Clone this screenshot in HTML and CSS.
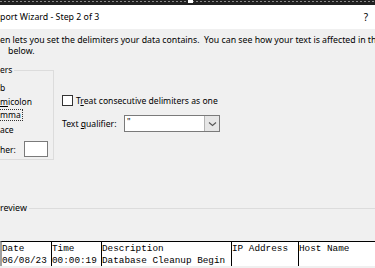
FILE: index.html
```html
<!DOCTYPE html>
<html lang="en">
<head>
    <meta charset="UTF-8">
    <meta name="viewport" content="width=device-width, initial-scale=1.0">
    <title>Text Import Wizard - Step 2 of 3</title>
    <link rel="stylesheet" href="styles.css">
</head>
<body>
    <div class="topbar"><span class="grip"></span></div>

    <div class="titlebar">
        <span class="title">port Wizard - Step 2 of 3</span>
        <span class="help">?</span>
    </div>

    <div class="intro">
        <span class="line">en lets you set the delimiters your data contains.&nbsp; You can see how your text is affected in the</span>
        <span class="line indent">below.</span>
    </div>

    <div class="options">
        <div class="group">
            <span class="group-title">ers</span>
            <div class="item">b</div>
            <div class="item"><u>m</u>icolon</div>
            <div class="item"><span class="focus">mma</span></div>
            <div class="item">ace</div>
            <div class="item other">her: <span class="textbox"></span></div>
        </div>

        <div class="side">
            <div class="check-row">
                <span class="checkbox"></span>
                <span>T<u>r</u>eat consecutive delimiters as one</span>
            </div>
            <div class="qualifier-row">
                <span class="qualifier-label">Text <u>q</u>ualifier:</span>
                <div class="select">
                    <span class="select-value">"</span>
                    <span class="select-arrow">
                        <svg width="9" height="6" viewBox="0 0 9 6"><path d="M1 1.5 L4.5 4.5 L8 1.5" fill="none" stroke="#555" stroke-width="1.1"/></svg>
                    </span>
                </div>
            </div>
        </div>
    </div>

    <div class="preview-head">
        <span>review</span>
        <span class="rule"></span>
    </div>

    <div class="preview">
        <div class="cell head">Date</div>
        <div class="cell head">Time</div>
        <div class="cell head">Description</div>
        <div class="cell head">IP Address</div>
        <div class="cell head">Host Name</div>
        <div class="cell">06/08/23</div>
        <div class="cell">00:00:19</div>
        <div class="cell">Database Cleanup Begin</div>
        <div class="cell"></div>
        <div class="cell"></div>
    </div>
</body>
</html>
```

FILE: styles.css
```css
body {
    margin: 0;
    height: 268px;
    overflow: hidden;
    background: #f0f0f0;
    font-family: "Noto Sans", sans-serif;
    font-size: 8.9px;
    color: #000;
}
.topbar {
    height: 5px;
    background-color: #202020;
    background-image: repeating-linear-gradient(90deg, #8a8a8a 0 2px, transparent 2px 4px);
    background-size: 100% 1px;
    background-position: 0 1px;
    background-repeat: no-repeat;
}
.grip {
    display: block;
    width: 5px;
    height: 3px;
    margin-left: 188px;
    background: #fff;
}
.titlebar {
    height: 24px;
    background: #fff;
    display: flex;
    align-items: center;
    justify-content: space-between;
    padding-right: 7px;
    font-size: 8.8px;
}
.help {
    font-size: 10px;
}
.intro {
    padding-top: 6px;
    font-size: 8.75px;
    line-height: 11px;
    white-space: nowrap;
}
.line {
    display: block;
}
.indent {
    padding-left: 8px;
}
.options {
    display: flex;
    margin-top: 13px;
}
.group {
    width: 53px;
    padding-bottom: 1px;
    border: 1px solid #dcdcdc;
    border-left: 0;
    font-size: 8.5px;
}
.group-title {
    display: block;
    width: fit-content;
    height: 12px;
    margin-top: -7px;
    margin-bottom: 4px;
    padding-right: 2px;
    line-height: 12px;
    background: #f0f0f0;
}
.item {
    display: flex;
    align-items: center;
    height: 14px;
    white-space: nowrap;
}
.focus {
    display: block;
    line-height: 10px;
    padding-right: 1px;
    outline: 1px dotted #333;
}
.other {
    height: 18px;
    margin-top: 4px;
    gap: 2px;
}
.textbox {
    width: 22px;
    height: 14px;
    margin-left: auto;
    margin-right: 5px;
    background: #fff;
    border: 1px solid #7a7a7a;
}
.side {
    margin-left: 8px;
    padding-top: 23px;
    font-size: 8.6px;
}
.check-row {
    display: flex;
    align-items: center;
    gap: 3px;
    height: 15px;
}
.checkbox {
    width: 9px;
    height: 9px;
    background: #fff;
    border: 1px solid #333;
}
.qualifier-row {
    display: flex;
    align-items: center;
    margin-top: 7px;
    height: 17px;
}
.qualifier-label {
    width: 62px;
}
.select {
    display: flex;
    width: 94px;
    height: 15px;
    background: #fff;
    border: 1px solid #7a7a7a;
}
.select-value {
    flex: 1;
    padding-left: 2px;
    line-height: 13px;
}
.select-arrow {
    width: 14px;
    display: flex;
    align-items: center;
    justify-content: center;
    background: #e6e6e6;
    border-left: 1px solid #b4b4b4;
}
.preview-head {
    display: flex;
    align-items: center;
    gap: 2px;
    margin-top: 42px;
    height: 12px;
    line-height: 12px;
}
.rule {
    flex: 1;
    border-top: 1px solid #dcdcdc;
}
.preview {
    display: grid;
    grid-template-columns: 50px 50px 130px 67px 1fr;
    margin-top: 27px;
    background: #fff;
    border-top: 1px solid #000;
    border-left: 2px solid #a0a0a0;
    font-family: "Liberation Mono", monospace;
    font-size: 9.33px;
}
.cell {
    height: 11px;
    line-height: 11px;
    border-right: 1px solid #000;
    white-space: nowrap;
    overflow: hidden;
}
.cell.head {
    height: 13px;
    line-height: 13px;
}
.cell:nth-child(5n) {
    border-right: 0;
}
```
